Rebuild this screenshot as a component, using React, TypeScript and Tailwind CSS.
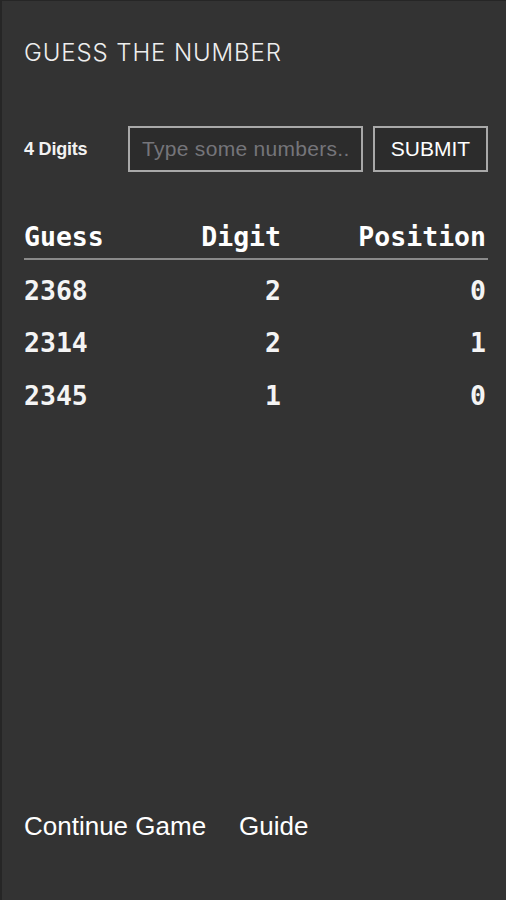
const rows = [
  { guess: "2368", digit: 2, position: 0 },
  { guess: "2314", digit: 2, position: 1 },
  { guess: "2345", digit: 1, position: 0 },
];

export default function App() {
  return (
    <div className="h-[900px] w-[506px] bg-[#333333] border-l-2 border-t border-[#262626] flex flex-col text-white font-['Helvetica_Neue','Liberation_Sans',Arial,sans-serif]">
      <div className="px-[22px] pt-[37px]">
        <h1 className="text-[24px] font-light tracking-[0.9px] text-[#eeeeee] font-['Inter','Liberation_Sans',sans-serif] leading-[30px]">
          GUESS THE NUMBER
        </h1>

        <div className="mt-[58px] flex items-center">
          <span className="w-[104px] shrink-0 text-[18px] font-semibold text-[#f2f2f2] tracking-[-0.2px]">4 Digits</span>
          <input
            type="text"
            placeholder="Type some numbers.."
            className="h-[46px] w-[235px] shrink-0 border-2 border-[#a9a9a9] bg-[#2c2c2c] px-[12px] text-[21px] tracking-[0.3px] text-white placeholder:text-[#75757a] outline-none"
          />
          <button className="ml-[10px] h-[46px] w-[115px] shrink-0 border-2 border-[#a9a9a9] bg-[#2c2c2c] text-[21px] text-white">
            SUBMIT
          </button>
        </div>

        <div className="mt-[49px] w-[464px] font-['DejaVu_Sans_Mono','Liberation_Mono',monospace] text-[26.5px] font-bold">
          <div className="grid grid-cols-[150px_107px_1fr] pb-[5px] border-b-2 border-[#8a8a8a] leading-[32px]">
            <span>Guess</span>
            <span className="text-right">Digit</span>
            <span className="text-right pr-[2px]">Position</span>
          </div>
          {rows.map((r) => (
            <div key={r.guess} className="grid grid-cols-[150px_107px_1fr] h-[52.5px] items-center leading-[32px] pt-[9px] text-[#f4f4f4]">
              <span>{r.guess}</span>
              <span className="text-right">{r.digit}</span>
              <span className="text-right pr-[2px]">{r.position}</span>
            </div>
          ))}
        </div>
      </div>

      <div className="mt-auto mb-[58px] px-[22px] flex gap-[33px] text-[26px] text-white leading-[32px]">
        <span>Continue Game</span>
        <span>Guide</span>
      </div>
    </div>
  );
}
